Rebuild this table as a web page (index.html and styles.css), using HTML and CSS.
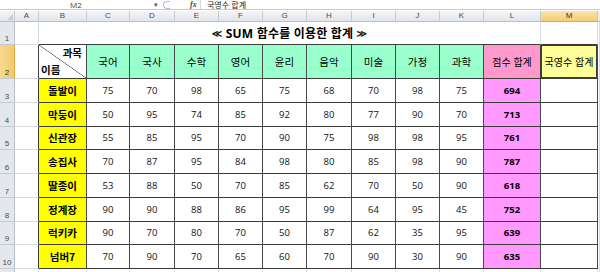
FILE: index.html
```html
<!DOCTYPE html>
<html lang="ko">
<head>
<meta charset="utf-8">
<title>SUM 함수를 이용한 합계</title>
<link rel="stylesheet" href="styles.css">
</head>
<body>
<div class="fbar">
  <div class="namebox">M2</div>
  <div class="drop">▾</div>
  <div class="handle"><span class="circ"></span></div>
  <div class="fx">fx</div>
  <div class="ftext">국영수 합계</div>
</div>
<div class="gap"></div>
<div class="sheet">
  <!-- column headers -->
  <div class="ch corner"><span class="tri"></span></div>
  <div class="ch">A</div><div class="ch">B</div><div class="ch">C</div><div class="ch">D</div><div class="ch">E</div><div class="ch">F</div><div class="ch">G</div><div class="ch">H</div><div class="ch">I</div><div class="ch">J</div><div class="ch">K</div><div class="ch">L</div><div class="ch selc">M</div><div class="ch fill"></div>

  <!-- row 1 -->
  <div class="rh">1</div>
  <div class="c"></div>
  <div class="c title tb"><span class="ang">≪</span> SUM 함수를 이용한 합계 <span class="ang">≫</span></div>
  <div class="c tb"></div>
  <div class="c"></div>

  <!-- row 2 -->
  <div class="rh selr">2</div>
  <div class="c lb"></div>
  <div class="t diag"><span class="dtop">과목</span><span class="dbot">이름</span></div>
  <div class="t hdr">국어</div><div class="t hdr">국사</div><div class="t hdr">수학</div><div class="t hdr">영어</div><div class="t hdr">윤리</div><div class="t hdr">음악</div><div class="t hdr">미술</div><div class="t hdr">가정</div><div class="t hdr">과학</div>
  <div class="t hpink">점수 합계</div>
  <div class="t hyel">국영수 합계</div>
  <div class="c"></div>

  <!-- row 3 -->
  <div class="rh">3</div><div class="c lb"></div><div class="t name">돌발이</div>
  <div class="t num">75</div><div class="t num">70</div><div class="t num">98</div><div class="t num">65</div><div class="t num">75</div><div class="t num">68</div><div class="t num">70</div><div class="t num">98</div><div class="t num">75</div>
  <div class="t sum">694</div><div class="t"></div><div class="c"></div>

  <!-- row 4 -->
  <div class="rh">4</div><div class="c lb"></div><div class="t name">막둥이</div>
  <div class="t num">50</div><div class="t num">95</div><div class="t num">74</div><div class="t num">85</div><div class="t num">92</div><div class="t num">80</div><div class="t num">77</div><div class="t num">90</div><div class="t num">70</div>
  <div class="t sum">713</div><div class="t"></div><div class="c"></div>

  <!-- row 5 -->
  <div class="rh">5</div><div class="c lb"></div><div class="t name">신관장</div>
  <div class="t num">55</div><div class="t num">85</div><div class="t num">95</div><div class="t num">70</div><div class="t num">90</div><div class="t num">75</div><div class="t num">98</div><div class="t num">98</div><div class="t num">95</div>
  <div class="t sum">761</div><div class="t"></div><div class="c"></div>

  <!-- row 6 -->
  <div class="rh">6</div><div class="c lb"></div><div class="t name">송집사</div>
  <div class="t num">70</div><div class="t num">87</div><div class="t num">95</div><div class="t num">84</div><div class="t num">98</div><div class="t num">80</div><div class="t num">85</div><div class="t num">98</div><div class="t num">90</div>
  <div class="t sum">787</div><div class="t"></div><div class="c"></div>

  <!-- row 7 -->
  <div class="rh">7</div><div class="c lb"></div><div class="t name">딸종이</div>
  <div class="t num">53</div><div class="t num">88</div><div class="t num">50</div><div class="t num">70</div><div class="t num">85</div><div class="t num">62</div><div class="t num">70</div><div class="t num">50</div><div class="t num">90</div>
  <div class="t sum">618</div><div class="t"></div><div class="c"></div>

  <!-- row 8 -->
  <div class="rh">8</div><div class="c lb"></div><div class="t name">정계장</div>
  <div class="t num">90</div><div class="t num">90</div><div class="t num">88</div><div class="t num">86</div><div class="t num">95</div><div class="t num">99</div><div class="t num">64</div><div class="t num">95</div><div class="t num">45</div>
  <div class="t sum">752</div><div class="t"></div><div class="c"></div>

  <!-- row 9 -->
  <div class="rh">9</div><div class="c lb"></div><div class="t name">럭키카</div>
  <div class="t num">90</div><div class="t num">70</div><div class="t num">80</div><div class="t num">70</div><div class="t num">50</div><div class="t num">87</div><div class="t num">62</div><div class="t num">35</div><div class="t num">95</div>
  <div class="t sum">639</div><div class="t"></div><div class="c"></div>

  <!-- row 10 -->
  <div class="rh">10</div><div class="c lb"></div><div class="t name">넘버7</div>
  <div class="t num">70</div><div class="t num">90</div><div class="t num">70</div><div class="t num">65</div><div class="t num">60</div><div class="t num">70</div><div class="t num">90</div><div class="t num">30</div><div class="t num">90</div>
  <div class="t sum">635</div><div class="t"></div><div class="c"></div>

  <!-- row 11 (partial, label cut off by window) -->
  <div class="rh"></div>
  <div class="c"></div><div class="c"></div><div class="c"></div><div class="c"></div><div class="c"></div><div class="c"></div><div class="c"></div><div class="c"></div><div class="c"></div><div class="c"></div><div class="c"></div><div class="c"></div><div class="c"></div><div class="c"></div>
</div>
</body>
</html>
```

FILE: styles.css
```css
* { box-sizing: border-box; }
html, body {
  margin: 0;
  padding: 0;
  background: #ffffff;
  width: 600px;
  height: 272px;
  overflow: hidden;
  font-family: "Open Sans", "Noto Sans CJK KR", sans-serif;
  color: #000;
}

/* formula bar */
.fbar {
  height: 10px;
  display: flex;
  align-items: center;
  border-bottom: 1px solid #c6cbd2;
  font-size: 8px;
  line-height: 9px;
  color: #333;
  overflow: hidden;
}
.namebox {
  width: 152px;
  text-align: center;
  font-size: 8px;
  color: #444;
}
.drop {
  width: 8px;
  font-size: 7px;
  color: #555;
  text-align: center;
}
.handle {
  width: 30px;
  display: flex;
  align-items: center;
  padding-left: 3px;
  height: 9px;
}
.circ {
  width: 7px;
  height: 8px;
  border: 1px solid #b8bec6;
  border-right: none;
  border-radius: 4px 0 0 4px;
}
.fx {
  width: 11px;
  font-family: "Liberation Serif", serif;
  font-style: italic;
  font-weight: bold;
  font-size: 8px;
  color: #444;
  border-right: 1px solid #d6d9de;
  height: 9px;
}
.ftext {
  padding-left: 6px;
  font-family: "Noto Sans CJK KR", sans-serif;
  font-size: 8px;
  color: #222;
}
.gap { height: 1px; }

/* sheet grid */
.sheet {
  display: grid;
  grid-template-columns: 15px 24px 48px 43px 45px 44px 44px 44px 45px 44px 44px 44px 57px 57px 2px;
  grid-template-rows: 11px 23px 34px 24px 24px 23px 24px 24px 24px 23px 24px 10px;
}

.ch {
  background: linear-gradient(#f3f5f8, #e2e6eb);
  border-right: 1px solid #c5cbd3;
  border-bottom: 1px solid #b9c0c9;
  font-size: 8px;
  line-height: 10px;
  color: #4a4a4a;
  text-align: center;
  font-family: "Liberation Sans", sans-serif;
}
.ch.corner { position: relative; }
.tri {
  position: absolute;
  right: 1px;
  bottom: 1px;
  width: 0;
  height: 0;
  border-left: 6px solid transparent;
  border-bottom: 6px solid #c6ccd3;
}
.ch.selc {
  background: linear-gradient(#fbe4a9, #f5cd73);
  border-bottom: 1px solid #e3a93d;
  color: #333;
}
.ch.fill { border-right: none; }

.rh {
  background: #e4e8ed;
  border-right: 1px solid #b9c0c9;
  border-bottom: 1px solid #c5cbd3;
  font-size: 8px;
  color: #4a4a4a;
  font-family: "Liberation Sans", sans-serif;
  display: flex;
  align-items: flex-end;
  justify-content: center;
  padding-bottom: 1px;
  line-height: 9px;
}
.rh.selr {
  background: linear-gradient(90deg, #f9d98e, #f4c86d);
  border-right: 1px solid #e3a93d;
  color: #333;
}

.c {
  border-right: 1px solid #d8dce2;
  border-bottom: 1px solid #d8dce2;
}
.c.lb { border-right: 1px solid #3c3c3c; }
.c.tb { border-bottom: 1px solid #3c3c3c; }

.title {
  grid-column: span 11;
  border-right: 1px solid #d8dce2;
  display: flex;
  align-items: center;
  justify-content: center;
  gap: 0;
  white-space: pre;
  font-weight: bold;
  font-size: 12px;
  letter-spacing: 0.2px;
}
.ang {
  font-family: "DejaVu Sans", sans-serif;
  font-size: 10px;
  font-weight: normal;
  -webkit-text-stroke: 0.3px #000;
}

.t {
  border-right: 1px solid #4a4a4a;
  border-bottom: 1px solid #3c3c3c;
  display: flex;
  align-items: center;
  justify-content: center;
  font-size: 10px;
  line-height: 12px;
}
.num { font-size: 9.5px; color: #111; }
.name {
  background: #ffff00;
  font-family: "Noto Sans CJK KR", sans-serif;
  font-weight: bold;
  font-size: 10.5px;
}
.sum {
  background: #ff99ff;
  font-weight: bold;
  font-size: 9.5px;
}
.hdr {
  background: #99ffcc;
  font-family: "Noto Sans CJK KR", sans-serif;
  font-size: 10.5px;
}
.hpink {
  background: #ff99cc;
  font-family: "Noto Sans CJK KR", sans-serif;
  font-size: 10px;
}
.hyel {
  background: #ffff99;
  font-family: "Noto Sans CJK KR", sans-serif;
  font-size: 10px;
  box-shadow: inset 0 0 0 1px #3c3c3c;
  border-left: 1px solid #3c3c3c;
  margin-left: -1px;
}
.diag {
  position: relative;
  background: linear-gradient(to top right, transparent calc(50% - 0.6px), #555 50%, transparent calc(50% + 0.6px));
  font-family: "Noto Sans CJK KR", sans-serif;
  font-weight: bold;
  font-size: 10.5px;
}
.dtop {
  position: absolute;
  right: 4px;
  top: 2px;
  line-height: 12px;
}
.dbot {
  position: absolute;
  left: 2px;
  bottom: 2px;
  line-height: 12px;
}
```
